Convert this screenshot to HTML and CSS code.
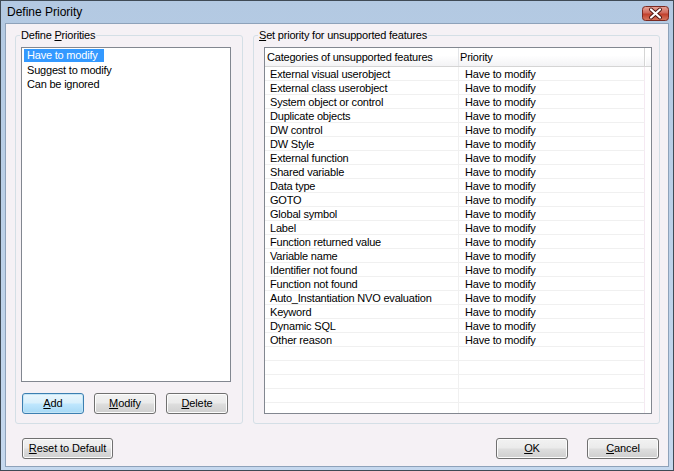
FILE: index.html
```html
<!DOCTYPE html>
<html>
<head>
<meta charset="utf-8">
<link rel="stylesheet" href="styles.css">
</head>
<body>
<div class="window">
  <div class="titlebar">
    <span class="title">Define Priority</span>
    <span class="close">
      <svg width="27" height="15" viewBox="0 0 27 15">
        <defs>
          <linearGradient id="cg" x1="0" y1="0" x2="0" y2="1">
            <stop offset="0" stop-color="#e8a89c"/>
            <stop offset="0.45" stop-color="#d0685a"/>
            <stop offset="0.55" stop-color="#c1402c"/>
            <stop offset="1" stop-color="#d77a62"/>
          </linearGradient>
        </defs>
        <rect x="0.5" y="0.5" width="26" height="14" rx="3" fill="url(#cg)" stroke="#7a2a22"/>
        <path d="M9 3.5 L18 11.5 M18 3.5 L9 11.5" stroke="#4a1510" stroke-width="4" stroke-linecap="round"/>
        <path d="M9 3.5 L18 11.5 M18 3.5 L9 11.5" stroke="#ffffff" stroke-width="2.2" stroke-linecap="round"/>
      </svg>
    </span>
  </div>
  <div class="client">
    <div class="groups">
      <fieldset class="group group-left">
        <legend>Define <u>P</u>riorities</legend>
        <div class="listbox">
          <div class="item selected">Have to modify</div>
          <div class="item">Suggest to modify</div>
          <div class="item">Can be ignored</div>
        </div>
        <div class="btnrow">
          <button class="btn default"><u>A</u>dd</button>
          <button class="btn"><u>M</u>odify</button>
          <button class="btn"><u>D</u>elete</button>
        </div>
      </fieldset>
      <fieldset class="group group-right">
        <legend><u>S</u>et priority for unsupported features</legend>
        <div class="grid">
          <div class="ghead">
            <div class="hc c1">Categories of unsupported features</div>
            <div class="hc c2">Priority</div>
            <div class="hc c3"></div>
          </div>
          <div class="gbody">
            <div class="row"><div class="c1">External visual userobject</div><div class="c2">Have to modify</div></div>
            <div class="row"><div class="c1">External class userobject</div><div class="c2">Have to modify</div></div>
            <div class="row"><div class="c1">System object or control</div><div class="c2">Have to modify</div></div>
            <div class="row"><div class="c1">Duplicate objects</div><div class="c2">Have to modify</div></div>
            <div class="row"><div class="c1">DW control</div><div class="c2">Have to modify</div></div>
            <div class="row"><div class="c1">DW Style</div><div class="c2">Have to modify</div></div>
            <div class="row"><div class="c1">External function</div><div class="c2">Have to modify</div></div>
            <div class="row"><div class="c1">Shared variable</div><div class="c2">Have to modify</div></div>
            <div class="row"><div class="c1">Data type</div><div class="c2">Have to modify</div></div>
            <div class="row"><div class="c1">GOTO</div><div class="c2">Have to modify</div></div>
            <div class="row"><div class="c1">Global symbol</div><div class="c2">Have to modify</div></div>
            <div class="row"><div class="c1">Label</div><div class="c2">Have to modify</div></div>
            <div class="row"><div class="c1">Function returned value</div><div class="c2">Have to modify</div></div>
            <div class="row"><div class="c1">Variable name</div><div class="c2">Have to modify</div></div>
            <div class="row"><div class="c1">Identifier not found</div><div class="c2">Have to modify</div></div>
            <div class="row"><div class="c1">Function not found</div><div class="c2">Have to modify</div></div>
            <div class="row"><div class="c1">Auto_Instantiation NVO evaluation</div><div class="c2">Have to modify</div></div>
            <div class="row"><div class="c1">Keyword</div><div class="c2">Have to modify</div></div>
            <div class="row"><div class="c1">Dynamic SQL</div><div class="c2">Have to modify</div></div>
            <div class="row"><div class="c1">Other reason</div><div class="c2">Have to modify</div></div>
            <div class="row"><div class="c1"></div><div class="c2"></div></div>
            <div class="row"><div class="c1"></div><div class="c2"></div></div>
            <div class="row"><div class="c1"></div><div class="c2"></div></div>
            <div class="row"><div class="c1"></div><div class="c2"></div></div>
            <div class="row"><div class="c1"></div><div class="c2"></div></div>
            <div class="row"><div class="c1"></div><div class="c2"></div></div>
          </div>
        </div>
      </fieldset>
    </div>
    <div class="bottom">
      <button class="btn wide"><u>R</u>eset to Default</button>
      <div class="spacer"></div>
      <button class="btn ok"><u>O</u>K</button>
      <button class="btn cancel"><u>C</u>ancel</button>
    </div>
  </div>
</div>
</body>
</html>
```

FILE: styles.css
```css
* { box-sizing: border-box; }
html, body { margin: 0; padding: 0; }
body {
  font-family: "Liberation Sans", Arial, sans-serif;
  font-size: 11px;
  letter-spacing: -0.2px;
  color: #000;
  background: #ffffff;
}
.window {
  width: 674px;
  height: 471px;
  border: 1px solid #3f4a55;
  background: linear-gradient(#b3c9e2, #c5d8ee);
  padding: 0 4px 3px 4px;
  display: flex;
  flex-direction: column;
}
.titlebar {
  height: 22px;
  display: flex;
  align-items: center;
  padding-left: 2px;
  flex: none;
}
.title {
  font-size: 12px;
  letter-spacing: 0;
  flex: 1;
}
.close {
  display: flex;
  margin-top: 3px;
  margin-right: 0;
}
.close svg { display: block; }
.client {
  flex: 1;
  background: #f5f1f5;
  border: 1px solid #8ea2ba;
  display: flex;
  flex-direction: column;
  padding: 4px 8px 0 9px;
}
.groups {
  display: flex;
  gap: 10px;
}
.group {
  margin: 0;
  border: 1px solid #d4dfe6;
  border-radius: 3px;
  height: 396px;
  padding: 0;
  min-width: 0;
}
.group legend {
  padding: 0 1px;
  line-height: 14px;
}
.group-left {
  width: 228px;
  padding: 5px 11px 0 5px;
}
.group-left legend { margin-left: -1px; }
.group-right {
  width: 407px;
  padding: 5px 7px 0 10px;
}
.group-right legend { margin-left: -6px; }
.listbox {
  height: 335px;
  background: #fff;
  border: 1px solid #828790;
  padding: 1px 0 0 2px;
}
.item {
  width: max-content;
  height: 14px;
  line-height: 14px;
  padding: 0 3px;
}
.item.selected {
  background: #3399ff;
  color: #fff;
  width: 80px;
  height: 13px;
  line-height: 13px;
  margin-bottom: 1px;
}
.btnrow {
  display: flex;
  gap: 10px;
  margin-top: 11px;
  padding-left: 1px;
}
.btn {
  font-family: "Liberation Sans", Arial, sans-serif;
  font-size: 11px;
  letter-spacing: -0.1px;
  color: #000;
  width: 62px;
  height: 21px;
  border: 1px solid #707070;
  border-radius: 3px;
  background: linear-gradient(#f2f2f2 0%, #ebebeb 45%, #dddddd 55%, #cfcfcf 100%);
  box-shadow: inset 0 0 0 1px #fcfcfc;
  padding: 0;
  line-height: 19px;
}
.btn.default {
  border-color: #3c7fb1;
  background: linear-gradient(#eaf6fd 0%, #d9f0fc 45%, #bee6fd 55%, #a7d9f5 100%);
  box-shadow: inset 0 0 0 1px #c4e5f6;
}
.grid {
  height: 367px;
  border: 1px solid #828790;
  background: #fff;
  overflow: hidden;
}
.ghead {
  display: flex;
  height: 19px;
  background: linear-gradient(#ffffff 0%, #ffffff 40%, #f3f3f5 100%);
  border-bottom: 1px solid #d5d5d5;
}
.hc {
  line-height: 18px;
  white-space: nowrap;
}
.ghead .c1 {
  width: 194px;
  padding-left: 2px;
  border-right: 1px solid #e3e5e8;
}
.ghead .c2 {
  width: 186px;
  padding-left: 1px;
  border-right: 1px solid #d5d5d5;
}
.ghead .c3 {
  flex: 1;
  border-left: 1px solid #ffffff;
}
.row {
  display: flex;
  height: 14px;
}
.row > div {
  height: 14px;
  line-height: 15px;
  border-bottom: 1px solid #f0f0f0;
  white-space: nowrap;
}
.row .c1 {
  width: 194px;
  padding-left: 5px;
  border-right: 1px solid #f0f0f0;
}
.row .c2 {
  width: 186px;
  padding-left: 6px;
  border-right: 1px solid #f5e9f2;
}
.bottom {
  display: flex;
  margin-top: 14px;
  padding-left: 7px;
}
.btn.wide { width: 91px; }
.spacer { flex: 1; }
.btn.ok { width: 72px; }
.btn.cancel { width: 72px; margin-left: 19px; margin-right: 1px; }
```
